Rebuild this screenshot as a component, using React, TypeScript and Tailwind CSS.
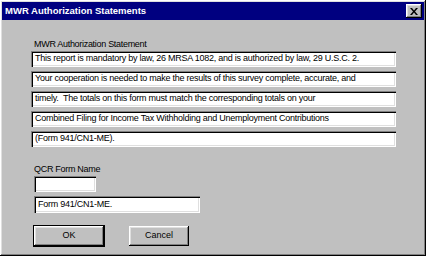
import React from "react";

const lines = [
  "This report is mandatory by law, 26 MRSA 1082, and is authorized by law, 29 U.S.C. 2.",
  "Your cooperation is needed to make the results of this survey complete, accurate, and",
  "timely.  The totals on this form must match the corresponding totals on your",
  "Combined Filing for Income Tax Withholding and Unemployment Contributions",
  "(Form 941/CN1-ME).",
];

const sunken =
  "bg-white shadow-[inset_1px_1px_#808080,inset_2px_2px_#000,inset_-1px_-1px_#fff,inset_-2px_-2px_#dfdfdf]";
const raised =
  "bg-[#c0c0c0] shadow-[inset_-1px_-1px_#000,inset_1px_1px_#fff,inset_-2px_-2px_#808080,inset_2px_2px_#dfdfdf]";

const Field = ({ text, className }: { text: string; className: string }) => (
  <div
    className={`${sunken} ${className} flex items-center px-[4px] whitespace-pre overflow-hidden text-[9px] tracking-[-0.25px]`}
  >
    {text}
  </div>
);

export default function App() {
  return (
    <div
      className={`${raised} w-[426px] h-[256px] p-[2px] flex flex-col text-[9px] text-black`}
      style={{ fontFamily: '"Liberation Sans", Arial, sans-serif' }}
    >
      {/* title bar */}
      <div className="h-[18px] bg-[#000080] flex items-center justify-between pl-[3px] pr-[2px]">
        <span className="text-white font-bold text-[9.5px]">MWR Authorization Statements</span>
        <button className={`${raised} w-[16px] h-[14px] flex items-center justify-center`}>
          <svg width="8" height="7" viewBox="0 0 8 7">
            <path d="M0 0h2l2 2.5L6 0h2L5 3.5 8 7H6L4 4.5 2 7H0l3-3.5z" fill="#000" />
          </svg>
        </button>
      </div>

      <div className="flex flex-col pl-[29px] pt-[18px]">
        <div className="pl-[3px] h-[12px] leading-[12px] tracking-[-0.3px]">MWR Authorization Statement</div>
        <div className="flex flex-col gap-[4px] mt-[1px]">
          {lines.map((l) => (
            <Field key={l} text={l} className="w-[365px] h-[16px]" />
          ))}
        </div>

        <div className="pl-[3px] mt-[16px] h-[12px] leading-[12px] tracking-[-0.3px]">QCR Form Name</div>
        <div className="pl-[3px] flex flex-col gap-[4px] mt-[1px]">
          <Field text="" className="w-[62px] h-[16px]" />
          <Field text="Form 941/CN1-ME." className="w-[166px] h-[17px]" />
        </div>

        <div className="pl-[3px] mt-[13px] flex gap-[25px]">
          <button className={`${raised} w-[70px] h-[20px] outline outline-1 outline-black`}>
            OK
          </button>
          <button className={`${raised} w-[60px] h-[20px]`}>Cancel</button>
        </div>
      </div>
    </div>
  );
}
